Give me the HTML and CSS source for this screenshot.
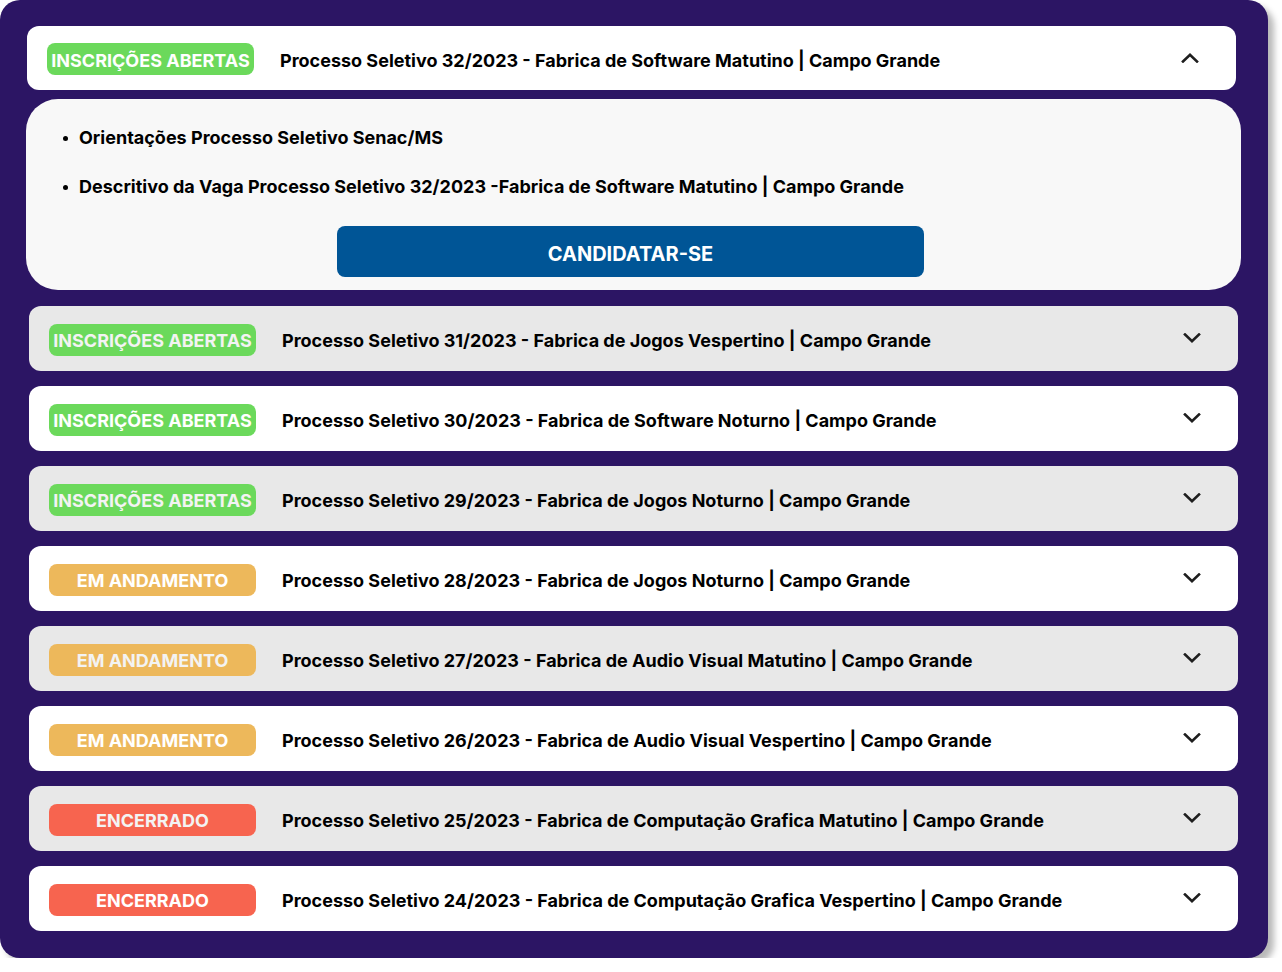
FILE: index.html
```html
<!DOCTYPE html>
<html lang="pt-BR">
<head>
<meta charset="utf-8">
<title>Processos Seletivos</title>
<link rel="stylesheet" href="styles.css">
</head>
<body>
<div class="frame">
  <div class="item open">
    <div class="head first white">
      <span class="badge green">INSCRIÇÕES ABERTAS</span>
      <span class="title">Processo Seletivo 32/2023 - Fabrica de Software Matutino | Campo Grande</span>
      <svg class="chev" viewBox="0 0 18 10" width="18" height="10"><path d="M2 8.5 L9 1.8 L16 8.5"/></svg>
    </div>
    <div class="panel">
      <ul class="links">
        <li>Orientações Processo Seletivo Senac/MS</li>
        <li>Descritivo da Vaga Processo Seletivo 32/2023 -Fabrica de Software Matutino | Campo Grande</li>
      </ul>
      <button class="apply">CANDIDATAR-SE</button>
    </div>
  </div>
  <div class="rows">
    <div class="head row gray">
      <span class="badge green">INSCRIÇÕES ABERTAS</span>
      <span class="title">Processo Seletivo 31/2023 - Fabrica de Jogos Vespertino | Campo Grande</span>
      <svg class="chev" viewBox="0 0 18 10" width="18" height="10"><path d="M2 1.5 L9 8.2 L16 1.5"/></svg>
    </div>
    <div class="head row white">
      <span class="badge green">INSCRIÇÕES ABERTAS</span>
      <span class="title">Processo Seletivo 30/2023 - Fabrica de Software Noturno | Campo Grande</span>
      <svg class="chev" viewBox="0 0 18 10" width="18" height="10"><path d="M2 1.5 L9 8.2 L16 1.5"/></svg>
    </div>
    <div class="head row gray">
      <span class="badge green">INSCRIÇÕES ABERTAS</span>
      <span class="title">Processo Seletivo 29/2023 - Fabrica de Jogos Noturno | Campo Grande</span>
      <svg class="chev" viewBox="0 0 18 10" width="18" height="10"><path d="M2 1.5 L9 8.2 L16 1.5"/></svg>
    </div>
    <div class="head row white">
      <span class="badge orange">EM ANDAMENTO</span>
      <span class="title">Processo Seletivo 28/2023 - Fabrica de Jogos Noturno | Campo Grande</span>
      <svg class="chev" viewBox="0 0 18 10" width="18" height="10"><path d="M2 1.5 L9 8.2 L16 1.5"/></svg>
    </div>
    <div class="head row gray">
      <span class="badge orange">EM ANDAMENTO</span>
      <span class="title">Processo Seletivo 27/2023 - Fabrica de Audio Visual Matutino | Campo Grande</span>
      <svg class="chev" viewBox="0 0 18 10" width="18" height="10"><path d="M2 1.5 L9 8.2 L16 1.5"/></svg>
    </div>
    <div class="head row white">
      <span class="badge orange">EM ANDAMENTO</span>
      <span class="title">Processo Seletivo 26/2023 - Fabrica de Audio Visual Vespertino | Campo Grande</span>
      <svg class="chev" viewBox="0 0 18 10" width="18" height="10"><path d="M2 1.5 L9 8.2 L16 1.5"/></svg>
    </div>
    <div class="head row gray">
      <span class="badge red">ENCERRADO</span>
      <span class="title">Processo Seletivo 25/2023 - Fabrica de Computação Grafica Matutino | Campo Grande</span>
      <svg class="chev" viewBox="0 0 18 10" width="18" height="10"><path d="M2 1.5 L9 8.2 L16 1.5"/></svg>
    </div>
    <div class="head row white">
      <span class="badge red">ENCERRADO</span>
      <span class="title">Processo Seletivo 24/2023 - Fabrica de Computação Grafica Vespertino | Campo Grande</span>
      <svg class="chev" viewBox="0 0 18 10" width="18" height="10"><path d="M2 1.5 L9 8.2 L16 1.5"/></svg>
    </div>
  </div>
</div>
</body>
</html>
```
FILE: styles.css
```css
* { box-sizing: border-box; }
html, body { margin: 0; padding: 0; background: #ffffff; }
body { font-family: Inter, "Noto Sans", sans-serif; color: #000; }

.frame {
  width: 1268px;
  height: 958px;
  background: #2c1564;
  border-radius: 20px;
  box-shadow: 6px 6px 6px rgba(0, 0, 0, 0.28);
  padding: 26px 32px 0 27px;
}

.head {
  display: flex;
  align-items: center;
  width: 1209px;
  height: 65px;
  border-radius: 12px;
  padding-left: 20px;
  padding-top: 2px;
}
.head.first { height: 64px; }
.head.white { background: #ffffff; }
.head.gray { background: #e8e8e8; }

.badge {
  flex: none;
  width: 207px;
  height: 32px;
  border-radius: 8px;
  display: flex;
  align-items: center;
  justify-content: center;
  padding-top: 2px;
  font-size: 18px;
  font-weight: 700;
  letter-spacing: 0;
  white-space: nowrap;
  color: #ffffff;
}
.gray .badge { color: #f3f3f3; }
.badge.green { background: #6bd95b; }
.badge.orange { background: #edb85b; }
.badge.red { background: #f7644f; }

.title {
  flex: 1;
  margin-left: 26px;
  padding-top: 2px;
  font-size: 18px;
  font-weight: 700;
  white-space: nowrap;
}

.chev {
  flex: none;
  margin-right: 37px;
  margin-top: -3px;
  fill: none;
  stroke: #1e1e1e;
  stroke-width: 2.6;
  stroke-linecap: square;
  stroke-linejoin: miter;
}

.panel {
  width: 1215px;
  height: 191px;
  margin: 9px 0 0 -1px;
  background: #f8f8f8;
  border-radius: 32px;
  padding-top: 27px;
}

.links {
  margin: 0;
  padding: 0 0 0 53px;
  list-style: none;
}
.links li {
  position: relative;
  font-size: 18px;
  font-weight: 700;
  line-height: 24px;
  margin-bottom: 25px;
  white-space: nowrap;
}
.links li:last-child { margin-bottom: 27px; }
.links li::before {
  content: "";
  position: absolute;
  left: -16px;
  top: 10px;
  width: 5px;
  height: 5px;
  border-radius: 50%;
  background: #000;
}

.apply {
  display: block;
  margin-left: 311px;
  width: 587px;
  height: 51px;
  border: none;
  border-radius: 8px;
  background: #005596;
  color: #ffffff;
  font-family: Inter, "Noto Sans", sans-serif;
  font-size: 20px;
  font-weight: 700;
  padding: 0;
  padding-top: 5px;
}

.rows {
  display: flex;
  flex-direction: column;
  gap: 15px;
  margin-top: 16px;
  margin-left: 2px;
}
```
